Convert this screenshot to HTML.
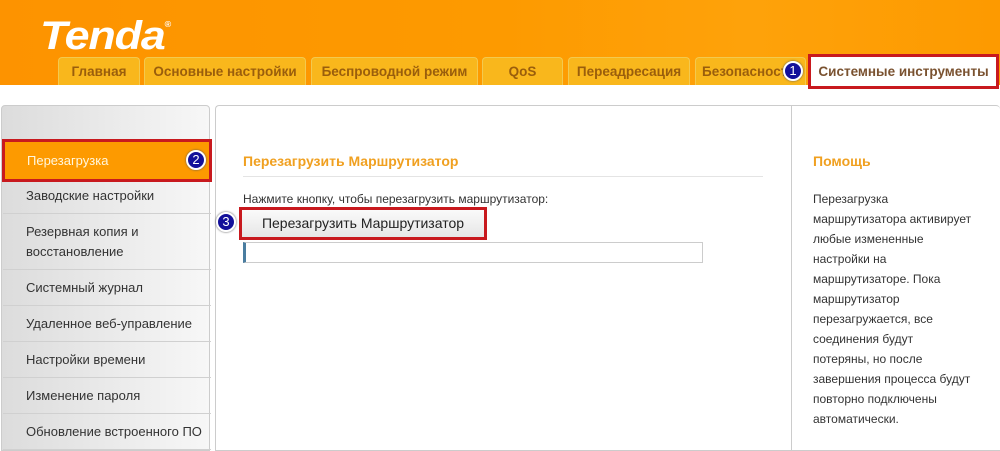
<!DOCTYPE html>
<html><head><meta charset="utf-8"><style>
*{margin:0;padding:0;box-sizing:border-box}
body{width:1000px;height:451px;overflow:hidden;background:#fff;font-family:"Liberation Sans",sans-serif;position:relative}
.hdr{position:absolute;left:0;top:0;width:1000px;height:85px;background:linear-gradient(90deg,#fd9300 0%,#fd9a00 50%,#fea20a 75%,#fd9a00 100%)}
.logo{position:absolute;left:40px;top:14px;font-size:40px;font-weight:bold;font-style:italic;color:#fff;letter-spacing:-1px;font-family:"Liberation Sans",sans-serif;transform:scaleX(1.12);transform-origin:left}
.logo sup{font-size:8px;font-style:normal;letter-spacing:0;vertical-align:top;position:relative;top:6px}
.tab{position:absolute;top:57px;height:28px;background:#f9b71c;border:1px solid #f3c94f;border-bottom:none;border-radius:4px 4px 0 0;color:#9a5e0c;font-weight:bold;font-size:13.5px;text-align:center;line-height:28px;white-space:nowrap;overflow:hidden}
.act{position:absolute;left:808px;top:54px;width:191px;height:35px;background:#fff;border:3px solid #c8191e;color:#7a5230;font-weight:bold;font-size:13.5px;line-height:29px;text-align:center}
.num{position:absolute;width:20px;height:20px;border-radius:50%;background:#13109a;border:2px solid #fff;color:#fff;font-size:13px;text-align:center;line-height:16px;box-shadow:0 0 2px #555}
.side{position:absolute;left:1px;top:105px;width:209px;height:346px;border:1px solid #ccc;border-radius:4px 4px 0 0;background:linear-gradient(90deg,#dcdcdc,#f7f7f7)}
.it{position:absolute;left:1px;width:208px;border-bottom:1px solid #d0d0d0;font-size:13px;color:#333;padding-left:23px;line-height:20px;display:flex;align-items:center}
.sel{position:absolute;left:2px;top:139px;width:210px;height:43px;background:#fd9a00;border:3px solid #c8191e;color:#fff6dd;font-size:13px;padding-left:22px;line-height:37px}
.main{position:absolute;left:215px;top:105px;width:785px;height:346px;border:1px solid #ccc;border-right:none;border-radius:4px 4px 0 0}
.helpdiv{position:absolute;left:791px;top:105px;width:1px;height:346px;background:#ccc}
.h{position:absolute;color:#f0a020;font-weight:bold;font-size:14px}
</style></head><body>
<div class="hdr">
<div class="logo">Tenda<sup>®</sup></div>
<div class="tab" style="left:58px;width:82px">Главная</div>
<div class="tab" style="left:144px;width:162px">Основные настройки</div>
<div class="tab" style="left:311px;width:167px">Беспроводной режим</div>
<div class="tab" style="left:482px;width:81px">QoS</div>
<div class="tab" style="left:568px;width:122px">Переадресация</div>
<div class="tab" style="left:695px;width:111px;text-align:left;padding-left:6px">Безопасность</div>
</div>
<div class="act">Системные инструменты</div>
<div class="num" style="left:783px;top:61px">1</div>
<div class="side">
<div class="it" style="top:72px;height:36px">Заводские настройки</div>
<div class="it" style="top:108px;height:56px">Резервная копия и<br>восстановление</div>
<div class="it" style="top:164px;height:36px">Системный журнал</div>
<div class="it" style="top:200px;height:36px">Удаленное веб-управление</div>
<div class="it" style="top:236px;height:36px">Настройки времени</div>
<div class="it" style="top:272px;height:36px">Изменение пароля</div>
<div class="it" style="top:308px;height:36px">Обновление встроенного ПО</div>
</div>
<div class="sel">Перезагрузка</div>
<div class="num" style="left:186px;top:150px">2</div>
<div class="main"></div>
<div class="helpdiv"></div>
<div class="h" style="left:243px;top:153px">Перезагрузить Маршрутизатор</div>
<div style="position:absolute;left:243px;top:176px;width:520px;height:1px;background:#e4e4e4"></div>
<div style="position:absolute;left:243px;top:192px;font-size:12px;color:#333">Нажмите кнопку, чтобы перезагрузить маршрутизатор:</div>
<div style="position:absolute;left:239px;top:207px;width:248px;height:33px;border:3px solid #c8191e;background:linear-gradient(#fafafa,#e6e6e6);font-size:14px;color:#222;text-align:center;line-height:27px">Перезагрузить Маршрутизатор</div>
<div class="num" style="left:216px;top:212px">3</div>
<div style="position:absolute;left:243px;top:242px;width:460px;height:21px;border:1px solid #ccc;border-left:3px solid #4a7da0"></div>
<div class="h" style="left:813px;top:153px">Помощь</div>
<div style="position:absolute;left:813px;top:189px;width:160px;font-size:12px;color:#333;line-height:20px">Перезагрузка маршрутизатора активирует любые измененные настройки на маршрутизаторе. Пока маршрутизатор перезагружается, все соединения будут<br>потеряны, но после завершения процесса будут повторно подключены автоматически.</div>
</body></html>
